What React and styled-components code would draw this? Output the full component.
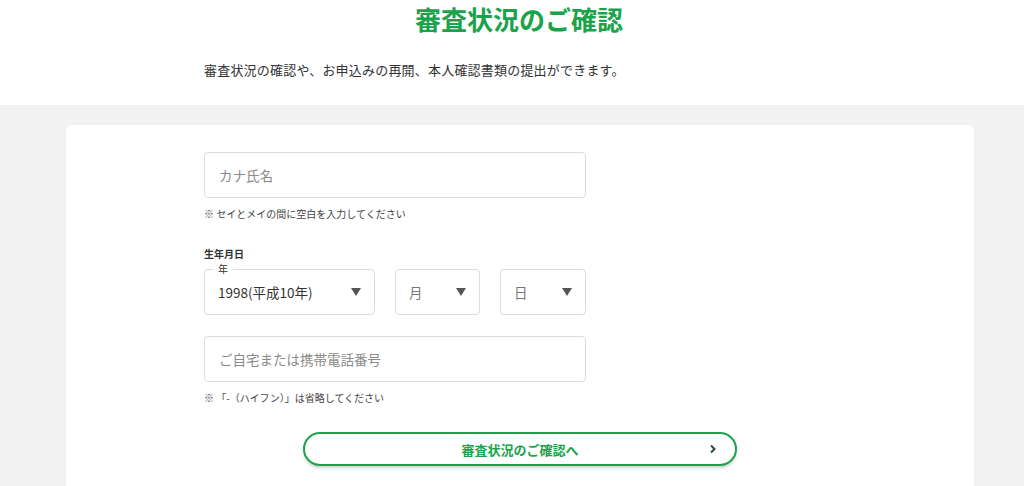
import React from 'react';
import styled, { createGlobalStyle } from 'styled-components';

const GlobalStyle = createGlobalStyle`
  html, body {
    margin: 0;
    padding: 0;
    background: #f2f2f2;
    font-family: "Noto Sans CJK JP", "Noto Sans", sans-serif;
    color: #333;
  }
  * { box-sizing: border-box; }
`;

const green = '#1aa34a';

const Header = styled.header`
  background: #fff;
  height: 105px;
`;

const Title = styled.h1`
  margin: 0;
  text-align: center;
  font-size: 26px;
  line-height: 38px;
  font-weight: 700;
  color: ${green};
  padding-left: 14px;
`;

const Lead = styled.p`
  margin: 22px 0 0 204px;
  font-size: 13px;
  line-height: 20px;
  letter-spacing: 0.2px;
  color: #333;
`;

const Main = styled.main`
  padding: 20px 50px 0 66px;
`;

const Card = styled.section`
  background: #fff;
  border-radius: 5px;
  padding: 27px 0 40px 138px;
  min-height: 400px;
`;

const Field = styled.div`
  width: 382px;
  margin-bottom: ${p => p.$mb || 0}px;
`;

const TextInput = styled.input`
  display: block;
  width: 100%;
  height: 46px;
  border: 1px solid #dcdcdc;
  border-radius: 4px;
  padding: 0 14px;
  font-family: inherit;
  font-size: 13.5px;
  color: #333;
  outline: none;
  &::placeholder { color: #8a8a8a; }
`;

const Note = styled.p`
  margin: 8px 0 0;
  font-size: 10px;
  line-height: 16px;
  color: #444;
`;

const Label = styled.div`
  font-size: 10px;
  font-weight: 700;
  line-height: 14px;
  margin-bottom: 8px;
`;

const SelectRow = styled.div`
  display: flex;
  gap: 20px;
  margin-bottom: 21px;
`;

const SelectBox = styled.div`
  position: relative;
  width: ${p => p.$w}px;
  height: 46px;
  border: 1px solid #dcdcdc;
  border-radius: 4px;
  display: flex;
  align-items: center;
  justify-content: space-between;
  padding: 0 13px;
  font-size: 13.5px;
  color: ${p => (p.$filled ? '#333' : '#777')};
`;

const Legend = styled.span`
  position: absolute;
  top: -8px;
  left: 8px;
  padding: 0 5px;
  background: #fff;
  font-size: 10px;
  line-height: 14px;
  color: #333;
`;

const Caret = styled.span`
  width: 0;
  height: 0;
  border-left: 5px solid transparent;
  border-right: 5px solid transparent;
  border-top: 8px solid #555;
`;

const ButtonWrap = styled.div`
  margin: 26px 0 0 99px;
`;

const SubmitButton = styled.button`
  position: relative;
  width: 434px;
  height: 34px;
  border: 2px solid ${green};
  border-radius: 17px;
  background: #fff;
  box-shadow: 0 2px 3px rgba(0, 0, 0, 0.18);
  color: ${green};
  font-family: inherit;
  font-size: 13px;
  font-weight: 700;
  cursor: pointer;
`;

const Chevron = styled.svg`
  position: absolute;
  right: 18px;
  top: 50%;
  transform: translateY(-50%);
`;

const Select = ({ width, value, legend, filled }) => (
  <SelectBox $w={width} $filled={filled}>
    {legend && <Legend>{legend}</Legend>}
    <span>{value}</span>
    <Caret />
  </SelectBox>
);

const App = () => (
  <>
    <GlobalStyle />
    <Header>
      <Title>審査状況のご確認</Title>
      <Lead>審査状況の確認や、お申込みの再開、本人確認書類の提出ができます。</Lead>
    </Header>
    <Main>
      <Card>
        <Field $mb={25}>
          <TextInput placeholder="カナ氏名" />
          <Note>※ セイとメイの間に空白を入力してください</Note>
        </Field>
        <Label>生年月日</Label>
        <SelectRow>
          <Select width={171} value="1998(平成10年)" legend="年" filled />
          <Select width={85} value="月" />
          <Select width={86} value="日" />
        </SelectRow>
        <Field>
          <TextInput placeholder="ご自宅または携帯電話番号" />
          <Note>※ 「-（ハイフン）」は省略してください</Note>
        </Field>
        <ButtonWrap>
          <SubmitButton>
            審査状況のご確認へ
            <Chevron width="8" height="10" viewBox="0 0 8 10">
              <path d="M2 1.5 L5.5 5 L2 8.5" fill="none" stroke="#2b4a3a" strokeWidth="2" />
            </Chevron>
          </SubmitButton>
        </ButtonWrap>
      </Card>
    </Main>
  </>
);

export default App;
